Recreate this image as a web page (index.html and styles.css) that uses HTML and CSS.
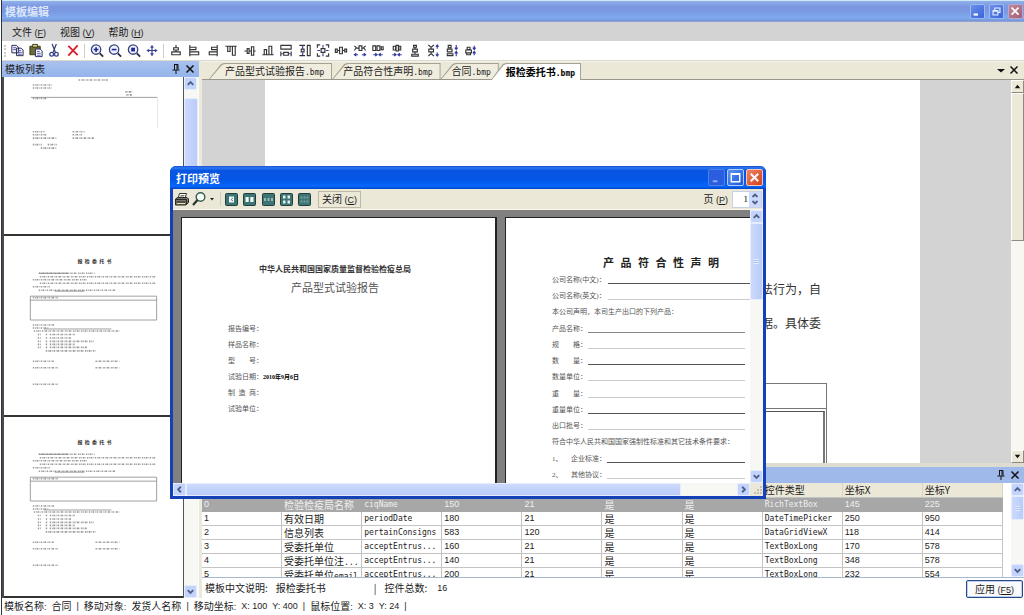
FILE: index.html
```html
<!DOCTYPE html>
<html lang="zh-CN">
<head>
<meta charset="utf-8">
<title>模板编辑</title>
<link rel="stylesheet" href="styles.css">
</head>
<body>
<svg class="defs" aria-hidden="true">
  <symbol id="up" viewBox="0 0 12 12"><path d="M3 7.5 6 4.5l3 3" fill="none" stroke="#4d6185" stroke-width="2"/></symbol>
  <symbol id="down" viewBox="0 0 12 12"><path d="M3 4.5l3 3 3-3" fill="none" stroke="#4d6185" stroke-width="2"/></symbol>
  <symbol id="left" viewBox="0 0 12 12"><path d="M7.5 3l-3 3 3 3" fill="none" stroke="#4d6185" stroke-width="2"/></symbol>
  <symbol id="right" viewBox="0 0 12 12"><path d="M4.500 3l3 3-3 3" fill="none" stroke="#4d6185" stroke-width="2"/></symbol>
  <symbol id="pin" viewBox="0 0 12 12"><path d="M4 1.500h4M4.500 1.500v5M7 1.500v5M8 1.500v5M2.500 7h7M6 7v4" fill="none" stroke="#111"/></symbol>
  <symbol id="cross" viewBox="0 0 12 12"><path d="M2.500 2.500l7 7m0-7l-7 7" fill="none" stroke="#111" stroke-width="1.500"/></symbol>
  <symbol id="form" viewBox="0 0 180 180">
    <text x="91" y="27" class="form-title" text-anchor="middle">报  检  委  托  书</text>
    <g class="micro">
      <path d="M35 37.500H91M36 41H152M29 44H84M36 47.500H152M29 51H46M35 54.500H112M29 62H54M29 89.500H51M29 92.500H45M30 95.500H117"/>
      <path d="M34 99h3M42 99h2M46 99h26M34 102.500h3M42 102.500h2M46 102.500h22M34 106h3M42 106h2M46 106h44M34 109h3M42 109h2M46 109h25M34 112h3M42 112h2M46 112h38M42 115.500h50"/>
      <path d="M29 126H50M92 126h24M29 132.500h25M92 132.500h24M29 149h25"/>
    </g>
    <path class="rule" d="M35 37.500H65M51 55.500H81M40 93.500H108M26.500 60.500h127v24h-127zM26.500 64.500h127"/>
  </symbol>
</svg>

<div class="app">
  <header class="titlebar">
    <h1>模板编辑</h1>
    <div class="win-buttons">
      <button class="win-btn" aria-label="最小化"><svg viewBox="0 0 15 15"><path d="M3 11h5" stroke="#fff" stroke-width="2.500"/></svg></button>
      <button class="win-btn" aria-label="还原"><svg viewBox="0 0 15 15"><path d="M5.500 6V3.500h6v5H9M3.500 6.500h5.500v5H3.500zM3.500 7h5.500" fill="none" stroke="#e6efff" stroke-width="1.300"/></svg></button>
      <button class="win-btn dim-close" aria-label="关闭"><svg viewBox="0 0 15 15"><path d="M3 3l8 8m0-8l-8 8" stroke="#fff" stroke-width="2"/></svg></button>
    </div>
  </header>

  <nav class="menubar">
    <button>文件<span class="lat"> (<u>F</u>)</span></button>
    <button>视图<span class="lat"> (<u>V</u>)</span></button>
    <button>帮助<span class="lat"> (<u>H</u>)</span></button>
  </nav>

  <div class="toolbar">
    <span class="handle"></span>
    <div class="tools tools-edit">
      <button aria-label="复制"><svg viewBox="0 0 16 16"><path d="M2.500 2.500h5l2 2v6h-7zM7.500 5.500h5l2 2v6h-7z" fill="#eef" stroke="#23234d"/><path d="M4 5h3M4 7h3M9 8h3M9 10h4M9 12h4" stroke="#4e54a0"/></svg></button>
      <button aria-label="粘贴"><svg viewBox="0 0 16 16"><path d="M1.500 3.500h11v9h-11z" fill="#6f6c35" stroke="#35330f"/><path d="M4.500 1.500h5v3h-5z" fill="#dcd88c" stroke="#35330f"/><path d="M7.500 6.500h5l2 2v6h-7z" fill="#fff" stroke="#252b70"/><path d="M9 9h3M9 11h4M9 13h4" stroke="#5058a8"/></svg></button>
      <button aria-label="剪切"><svg viewBox="0 0 16 16"><path d="M6 1l3.500 9M10.500 1L7 10" stroke="#333c68" stroke-width="1.300"/><g fill="none" stroke="#35408a" stroke-width="1.400"><circle cx="5.500" cy="12" r="2"/><circle cx="10.500" cy="12" r="2"/></g></svg></button>
      <button aria-label="删除"><svg viewBox="0 0 16 16"><path d="M3 3l10 10M13 2.500L3 13.500" stroke="#d8222a" stroke-width="2"/></svg></button>
    </div>
    <span class="sep"></span>
    <div class="tools tools-zoom">
      <button aria-label="放大"><svg viewBox="0 0 16 16"><circle cx="7" cy="7" r="5" fill="#eef1ff" stroke="#39407e" stroke-width="1.400"/><path d="M4.500 7h5M7 4.500v5" stroke="#20278a" stroke-width="1.700"/><path d="M11 11l3.500 3.500" stroke="#2b2d48" stroke-width="2"/></svg></button>
      <button aria-label="缩小"><svg viewBox="0 0 16 16"><circle cx="7" cy="7" r="5" fill="#eef1ff" stroke="#39407e" stroke-width="1.400"/><path d="M4.500 7h5" stroke="#20278a" stroke-width="1.700"/><path d="M11 11l3.500 3.500" stroke="#2b2d48" stroke-width="2"/></svg></button>
      <button aria-label="适合"><svg viewBox="0 0 16 16"><circle cx="7" cy="7" r="5" fill="#eef1ff" stroke="#39407e" stroke-width="1.400"/><path d="M5 5h4v4H5z" fill="#20278a"/><path d="M11 11l3.500 3.500" stroke="#2b2d48" stroke-width="2"/></svg></button>
      <button aria-label="移动"><svg viewBox="0 0 16 16"><path d="M8 3v10M3 8h10" stroke="#3a4290" stroke-width="1.300"/><path d="M8 2L6 5h4zM8 14l-2-3h4zM2 8l3-2v4zM14 8l-3-2v4z" fill="#3a4290"/></svg></button>
    </div>
    <span class="sep"></span>
    <div class="tools tools-align">
      <button aria-label="居中对齐"><svg viewBox="0 0 16 16"><path d="M8 2v3M8 7.500v2M5.500 5h5v2.500h-5zM3.500 9.500h9v3h-9z"/></svg></button>
      <button aria-label="左对齐"><svg viewBox="0 0 16 16"><path d="M3.500 2v12M4 4.500h6v2.500H4M4 9.500h9v3H4"/></svg></button>
      <button aria-label="右对齐"><svg viewBox="0 0 16 16"><path d="M12.500 2v12M12 4.500H6.500v2.500H12M12 9.500H4v3h8"/></svg></button>
      <button aria-label="顶端对齐"><svg viewBox="0 0 16 16"><path d="M2 3.500h12M4.500 4v5h2.500V4M9.500 4v9h3V4"/></svg></button>
      <button aria-label="中部对齐"><svg viewBox="0 0 16 16"><path d="M2 8.500h3M7 8.500h2.500M12 8.500h2M5 6v5h2V6zM9.500 4v9H12V4z"/></svg></button>
      <button aria-label="底端对齐"><svg viewBox="0 0 16 16"><path d="M2 12.500h12M4 12V7h2.500v5M9 12V3.500h3V12"/></svg></button>
      <button aria-label="相同宽度"><svg viewBox="0 0 16 16"><path d="M2.500 2.500h11v4h-11zM5.500 10h5v3h-5zM2.500 9v5M13.500 9v5"/><path class="blue" d="M3 11.500h2M11 11.500h2"/></svg></button>
      <button aria-label="相同高度"><svg viewBox="0 0 16 16"><path d="M10.500 2.500h3v11h-3zM4 6.500h3v3H4zM2 2.500h6M2 13.500h6"/><path class="blue" d="M5.500 3v3M5.500 10v3"/></svg></button>
      <button aria-label="相同大小"><svg viewBox="0 0 16 16"><path d="M2 5V2h3M11 2h3v3M14 11v3h-3M5 14H2v-3M6 6h4v4H6z"/><path class="blue" d="M8 2v3M8 11v3M2 8h3M11 8h3"/></svg></button>
      <button aria-label="水平间距相等"><svg viewBox="0 0 16 16"><path d="M2 6.500v3.500h2V6.500zM6.500 4.500v7h3v-7zM12 6.500v3h2v-3zM4 8h2M10 8h2"/></svg></button>
      <button aria-label="增大水平间距"><svg viewBox="0 0 16 16"><path d="M2 3l2 2-2 3M7 3v5h3V3zM14 3l-2 2 2 3M4 5.500h3M10 5.500h2"/><path class="blue" d="M2 12.500h4M10 12.500h4M4 11l-2 1.500L4 14M12 11l2 1.500-2 1.500"/></svg></button>
      <button aria-label="减小水平间距"><svg viewBox="0 0 16 16"><path d="M2.500 3v5h3V3zM7 3v5h3V3zM11.500 4v3h2V4z"/><path class="blue" d="M3 12.500h4M9 12.500h4M5 11l2 1.500L5 14M11 11l-2 1.500 2 1.500"/></svg></button>
      <button aria-label="移除水平间距"><svg viewBox="0 0 16 16"><path d="M4 3.500v4h2.500v-4zM7 2.500v6h2.500v-6zM10 3.500v4h2v-4z"/><path class="blue" d="M3 12.500h4M9 12.500h4M5 11l2 1.500L5 14M11 11l-2 1.500 2 1.500"/></svg></button>
      <button aria-label="垂直间距相等"><svg viewBox="0 0 16 16"><path d="M6.500 2.500h3v2h-3zM5.500 6.500h5v3h-5zM4.500 12h7v2h-7zM8 4.500v2M8 10v2"/></svg></button>
      <button aria-label="增大垂直间距"><svg viewBox="0 0 16 16"><path d="M3 2l2 2h2l2-2M3.500 6.500h5v3h-5zM3 14l2-2h2l2 2M6 4v2M6 10v2"/><path class="blue" d="M12.500 2v4M12.500 10v4M11 4l1.500-2L14 4M11 12l1.500 2 1.500-2"/></svg></button>
      <button aria-label="减小垂直间距"><svg viewBox="0 0 16 16"><path d="M4 2.500h3v2.500H4zM3 6.500h5v3H3zM3 11.500h6v2H3z"/><path class="blue" d="M12.500 2v5M12.500 9v5M11 5l1.500 2L14 5M11 11l1.500-2 1.500 2"/></svg></button>
      <button aria-label="移除垂直间距"><svg viewBox="0 0 16 16"><path d="M5 4.500h3V7H5zM3.500 7.500h6v3h-6zM4.500 10.500h4v2h-4z"/><path class="blue" d="M12.500 3v4M12.500 9v4M11 5l1.500 2L14 5M11 11l1.500-2 1.500 2"/></svg></button>
    </div>
  </div>

  <main class="workspace">
    <aside class="side">
      <div class="pane-head">
        <h2>模板列表</h2>
        <button aria-label="固定"><svg><use href="#pin"/></svg></button>
        <button aria-label="关闭"><svg><use href="#cross"/></svg></button>
      </div>
      <div class="side-body">
        <div class="thumbs">
          <svg class="thumb" viewBox="0 0 180 158">
            <path class="micro" d="M75 3h30M29 8h19M29 11h19M122 15h8M123 18h6M29 21.500h14M29 55h12M69 55h12M29 58h14M69 58h10M29 61.500h24M69 61.500h22M29 68h9M44 68h9M37 71.500h16"/>
            <path class="rule" d="M27 20.500H154"/>
            <path class="rule faint" d="M154.500 20V52"/>
          </svg>
          <svg class="thumb" viewBox="0 0 180 180"><use href="#form"/></svg>
          <svg class="thumb" viewBox="0 0 180 180"><use href="#form"/></svg>
        </div>
        <div class="scroll scroll-side">
          <button aria-label="向上"><svg><use href="#up"/></svg></button>
          <span class="thumb-bar"></span>
          <button aria-label="向下"><svg><use href="#down"/></svg></button>
        </div>
      </div>
    </aside>

    <section class="content">
      <div class="tabs">
        <button class="tab">产品型式试验报告<span class="lat">.bmp</span></button>
        <button class="tab">产品符合性声明<span class="lat">.bmp</span></button>
        <button class="tab">合同<span class="lat">.bmp</span></button>
        <button class="tab active">报检委托书<span class="lat">.bmp</span></button>
        <span class="grow"></span>
        <button class="tab-tool" aria-label="标签列表"><svg viewBox="0 0 12 12"><path d="M2 5h8L6 8.500z" fill="#111"/></svg></button>
        <button class="tab-tool" aria-label="关闭"><svg><use href="#cross"/></svg></button>
      </div>

      <div class="canvas">
        <article class="doc">
          <p>法行为，自</p>
          <p>据。具体委</p>
          <div class="doc-grid"><div class="doc-grid-head"></div><div class="doc-grid-body"></div></div>
        </article>
        <div class="classic">
          <button aria-label="向上"><svg viewBox="0 0 12 12"><path d="M6 4L9 8H3z" fill="#111"/></svg></button>
          <span class="classic-thumb"></span>
          <span class="grow"></span>
          <button aria-label="向下"><svg viewBox="0 0 12 12"><path d="M6 8L9 4H3z" fill="#111"/></svg></button>
        </div>
      </div>

      <div class="pane-head grid-head">
        <h2></h2>
        <button aria-label="固定"><svg><use href="#pin"/></svg></button>
        <button aria-label="关闭"><svg><use href="#cross"/></svg></button>
      </div>
      <div class="grid-body">
        <div class="grid-view">
          <table>
            <thead><tr><th></th><th></th><th></th><th></th><th></th><th></th><th></th><th>控件类型</th><th>坐标X</th><th>坐标Y</th></tr></thead>
            <tbody>
              <tr class="selected"><td>0</td><td class="zh">检验检疫局名称</td><td class="code">ciqName</td><td>150</td><td>21</td><td class="zh">是</td><td class="zh">是</td><td class="code">RichTextBox</td><td>145</td><td>225</td></tr>
              <tr><td>1</td><td class="zh">有效日期</td><td class="code">periodDate</td><td>180</td><td>21</td><td class="zh">是</td><td class="zh">是</td><td class="code">DateTimePicker</td><td>250</td><td>950</td></tr>
              <tr><td>2</td><td class="zh">信息列表</td><td class="code">pertainConsigns</td><td>583</td><td>120</td><td class="zh">是</td><td class="zh">是</td><td class="code">DataGridViewX</td><td>118</td><td>414</td></tr>
              <tr><td>3</td><td class="zh">受委托单位</td><td class="code">acceptEntrus...</td><td>160</td><td>21</td><td class="zh">是</td><td class="zh">是</td><td class="code">TextBoxLong</td><td>170</td><td>578</td></tr>
              <tr><td>4</td><td class="zh">受委托单位注<span class="lat">...</span></td><td class="code">acceptEntrus...</td><td>140</td><td>21</td><td class="zh">是</td><td class="zh">是</td><td class="code">TextBoxLong</td><td>348</td><td>578</td></tr>
              <tr><td>5</td><td class="zh">受委托单位<span class="lat">email</span></td><td class="code">acceptEntrus...</td><td>200</td><td>21</td><td class="zh">是</td><td class="zh">是</td><td class="code">TextBoxLong</td><td>232</td><td>554</td></tr>
            </tbody>
          </table>
        </div>
        <div class="scroll scroll-grid">
          <button aria-label="向上"><svg><use href="#up"/></svg></button>
          <span class="thumb-bar grip-v"></span>
          <span class="grow"></span>
          <button aria-label="向下"><svg><use href="#down"/></svg></button>
        </div>
      </div>
      <div class="grid-foot">
        <span>模板中文说明:</span><span class="desc">报检委托书</span><span class="bar">|</span><span class="count">控件总数:</span><span class="num-text">16</span>
        <span class="grow"></span>
        <button class="apply">应用<span class="lat"> (<u>F5</u>)</span></button>
      </div>
    </section>
  </main>

  <footer class="status">
    <span>模板名称<b>:</b></span><span>合同</span><b>|</b>
    <span>移动对象<b>:</b></span><span>发货人名称</span><b>|</b>
    <span>移动坐标<b>:</b></span><b>X: 100</b><b>Y: 400</b><b>|</b>
    <span>鼠标位置<b>:</b></span><b>X: 3</b><b>Y: 24</b><b>|</b>
  </footer>

  <section class="dialog" role="dialog" aria-label="打印预览">
    <div class="dialog-title">
      <h2>打印预览</h2>
      <div class="win-buttons dialog-buttons">
        <button class="win-btn" aria-label="最小化"><svg viewBox="0 0 16 16"><path d="M4 12h5" stroke="#8fb2f2" stroke-width="2"/></svg></button>
        <button class="win-btn bright" aria-label="最大化"><svg viewBox="0 0 16 16"><path d="M3.500 4h9v8.500h-9zM3 4.500h10" fill="none" stroke="#fff" stroke-width="1.500"/></svg></button>
        <button class="win-btn close" aria-label="关闭"><svg viewBox="0 0 16 16"><path d="M4 4l8 8m0-8l-8 8" stroke="#fff" stroke-width="2"/></svg></button>
      </div>
    </div>
    <div class="dialog-tools">
      <button class="icon" aria-label="打印"><svg viewBox="0 0 16 16"><path d="M5.500 2.500h7l-1.500 5H4z" fill="#fff" stroke="#333"/><path d="M6.500 4.500h4M6 6h4" stroke="#777"/><path d="M1.500 8l2-1.500h9.500L14.500 8v3.500l-2.500 2.500H1.500z" fill="#77776d" stroke="#292925"/><path d="M2 8.500h10.500v5M2.500 11h9" fill="none" stroke="#292925"/><path d="M3 12.500h8" stroke="#e9e4a6"/></svg></button>
      <button class="icon" aria-label="缩放"><svg viewBox="0 0 16 16"><circle cx="9.500" cy="6" r="4.300" fill="#f5fff8" stroke="#3c5b50" stroke-width="1.400"/><path d="M6.500 9L2 14" stroke="#25352e" stroke-width="2.200"/></svg></button>
      <button class="caret" aria-label="缩放选项"><svg viewBox="0 0 8 8"><path d="M2 3h4L4 5.500z" fill="#222"/></svg></button>
      <span class="sep"></span>
      <div class="page-modes">
        <button aria-label="一页"><svg viewBox="0 0 13 13"><rect x="0.500" y="0.500" width="12" height="12" rx="1" fill="#3e7474" stroke="#203f3f"/><path d="M4 3.500h5v6H4z" fill="#eef7f4"/><path d="M8 5L6 6.500 8 8" fill="none" stroke="#5c8583"/></svg></button>
        <button aria-label="两页"><svg viewBox="0 0 13 13"><rect x="0.500" y="0.500" width="12" height="12" rx="1" fill="#3e7474" stroke="#203f3f"/><path d="M2.500 4h3.200v5H2.500zM7.300 4h3.200v5H7.300z" fill="#eef7f4"/></svg></button>
        <button aria-label="三页"><svg viewBox="0 0 13 13"><rect x="0.500" y="0.500" width="12" height="12" rx="1" fill="#3e7474" stroke="#203f3f"/><path d="M2 5h2v3H2zM5.500 5h2v3h-2zM9 5h2v3H9z" fill="#8fb8b3"/></svg></button>
        <button aria-label="四页"><svg viewBox="0 0 13 13"><rect x="0.500" y="0.500" width="12" height="12" rx="1" fill="#3e7474" stroke="#203f3f"/><path d="M3 2.500h2.500v3H3zM7.500 2.500H10v3H7.500zM3 7.500h2.500v3H3zM7.500 7.500H10v3H7.500z" fill="#e0f0ec"/></svg></button>
        <button aria-label="六页"><svg viewBox="0 0 13 13"><rect x="0.500" y="0.500" width="12" height="12" rx="1" fill="#3e7474" stroke="#203f3f"/><path d="M2.500 3.500h2v2h-2zM5.500 3.500h2v2h-2zM8.500 3.500h2v2h-2zM2.500 7.500h2v2h-2zM5.500 7.500h2v2h-2zM8.500 7.500h2v2h-2z" fill="#6f9d99"/></svg></button>
      </div>
      <button class="close-preview">关闭<span class="lat"> (<u>C</u>)</span></button>
      <span class="grow"></span>
      <label for="page-no">页<span class="lat"> (<u>P</u>)</span></label>
      <div class="spinner">
        <input id="page-no" type="text" value="1">
        <div class="spin-buttons">
          <button aria-label="下一页"><svg viewBox="0 0 10 7"><path d="M2.500 5L5 2.500 7.500 5" fill="none" stroke="#4d6185" stroke-width="1.800"/></svg></button>
          <button aria-label="上一页"><svg viewBox="0 0 10 7"><path d="M2.500 2L5 4.500 7.500 2" fill="none" stroke="#4d6185" stroke-width="1.800"/></svg></button>
        </div>
      </div>
    </div>
    <div class="preview">
      <div class="pages">
        <article class="page report">
          <h3>中华人民共和国国家质量监督检验检疫总局</h3>
          <h4>产品型式试验报告</h4>
          <ul>
            <li>报告编号：</li>
            <li>样品名称：</li>
            <li><span class="spread"><i>型</i><i>号</i></span>：</li>
            <li>试验日期：<b>2010年9月6日</b></li>
            <li><span class="spread"><i>制</i><i>造</i><i>商</i></span>：</li>
            <li>试验单位：</li>
          </ul>
        </article>
        <article class="page statement">
          <h3><i>产</i><i>品</i><i>符</i><i>合</i><i>性</i><i>声</i><i>明</i></h3>
          <div class="fields">
            <div class="wide"><span class="name">公司名称(中文)：</span><span class="line dark"></span></div>
            <div class="wide"><span class="name">公司名称(英文)：</span><span class="line"></span></div>
            <div><span>本公司声明，本司生产出口的下列产品：</span></div>
            <div><span class="name">产品名称：</span><span class="line mid"></span></div>
            <div><span class="name"><span class="spread"><i>规</i><i>格</i></span>：</span><span class="line"></span></div>
            <div><span class="name"><span class="spread"><i>数</i><i>量</i></span>：</span><span class="line dark"></span></div>
            <div><span class="name">数量单位：</span><span class="line"></span></div>
            <div><span class="name"><span class="spread"><i>重</i><i>量</i></span>：</span><span class="line"></span></div>
            <div><span class="name">重量单位：</span><span class="line dark"></span></div>
            <div><span class="name">出口批号：</span><span class="line"></span></div>
            <div><span>符合中华人民共和国国家强制性标准和其它技术条件要求：</span></div>
            <div class="item"><span class="num">1、</span><span class="name">企业标准：</span><span class="line dark"></span></div>
            <div class="item"><span class="num">2、</span><span class="name">其他协议：</span><span class="line"></span></div>
          </div>
        </article>
      </div>
      <div class="scroll scroll-preview">
        <button aria-label="向上"><svg><use href="#up"/></svg></button>
        <span class="thumb-bar grip-v"></span>
        <span class="grow"></span>
        <button aria-label="向下"><svg><use href="#down"/></svg></button>
      </div>
    </div>
    <div class="h-row">
      <div class="scroll-h">
        <button aria-label="向左"><svg><use href="#left"/></svg></button>
        <span class="thumb-bar"></span>
        <button aria-label="向右"><svg><use href="#right"/></svg></button>
      </div>
      <svg class="size-grip" viewBox="0 0 13 13"><path d="M10 4h2M10 7h2M7 7h2M10 10h2M7 10h2M4 10h2" stroke="#b8b4a2" stroke-width="1.500"/></svg>
    </div>
  </section>
</div>
</body>
</html>
```

FILE: styles.css
```css
* { box-sizing: border-box; }

body {
  margin: 0;
  font: 10px/14px "Noto Sans CJK SC", sans-serif;
  color: #1c1c1c;
  background: #fff;
}

button {
  margin: 0;
  padding: 0;
  border: 0;
  background: none;
  font: inherit;
  color: inherit;
}

svg { display: block; }
h1, h2, h3, h4, p, ul { margin: 0; padding: 0; font-weight: normal; }
ul { list-style: none; }
i { font-style: normal; }
.defs { position: absolute; width: 0; height: 0; }
.grow { flex: 1; }
.lat { font: 9px/12px "Liberation Sans", sans-serif; white-space: pre; }

.app {
  position: relative;
  display: flex;
  flex-direction: column;
  height: 100vh;
  margin-left: 1px;
  border-left: 1px solid #2c3444;
  overflow: hidden;
}

/* Main window chrome */
.titlebar {
  display: flex;
  align-items: center;
  justify-content: space-between;
  height: 22px;
  padding: 0 1px 0 3px;
  border-top: 1px solid #cfe6f6;
  border-bottom: 1px solid #8ea0d4;
  background: linear-gradient(#8fb0ea 0, #7b96e0 30%, #7b9ae2 55%, #7fabee 85%, #7694d6 100%);
}
.titlebar h1 { font-size: 11px; font-weight: bold; color: #dce6fa; }
.win-buttons { display: flex; gap: 4px; }
.win-btn {
  width: 15px;
  height: 15px;
  border: 1px solid #9db9f3;
  border-radius: 2px;
  background: linear-gradient(135deg, #6c90ea, #3b63d8);
}
.win-btn svg { width: 100%; height: 100%; }
.dim-close { background: linear-gradient(135deg, #c08a9c, #a35c74); border-color: #b8a8d0; }

.menubar {
  display: flex;
  gap: 14px;
  height: 19px;
  padding-left: 10px;
  background: #d3d3d3;
}

.toolbar {
  display: flex;
  align-items: center;
  height: 19px;
  padding-left: 2px;
  background: #fff;
}
.handle { width: 2px; height: 12px; margin-right: 3px; border-left: 2px dotted #ccc; }
.tools { display: flex; justify-content: space-between; }
.tools svg { width: 16px; height: 15px; }
.tools-edit { width: 72px; }
.tools-zoom { width: 71px; }
.tools-align { width: 310px; }
.tools-align path { fill: none; stroke: #333; stroke-width: 1.2; }
.tools-align .blue { stroke: #3038a0; }
.sep { width: 1px; height: 14px; margin: 0 4px 0 3px; background: #ccc; }

.workspace {
  display: flex;
  flex: 1;
  min-height: 0;
  gap: 3px;
  border-top: 1px solid #dcd9cc;
  background: #ebe8dc;
}

/* Panes */
.pane-head {
  display: flex;
  align-items: center;
  gap: 2px;
  height: 16px;
  padding: 0 3px 0 3px;
  background: #9fb9ea;
}
.pane-head h2 { flex: 1; font-size: 10px; }
.pane-head svg { width: 12px; height: 12px; }
.side { display: flex; flex-direction: column; width: 197px; }
.side .pane-head { background: linear-gradient(#a9c1ee, #94b4ea); }
.side-body { display: flex; flex: 1; min-height: 0; background: #fbfbf8; }
.thumbs {
  flex: 1;
  overflow: hidden;
  border-left: 2px solid #4b4b4b;
  border-right: 1px solid #555;
  background: #fff;
}
.thumb { width: 100%; height: auto; border-bottom: 2px solid #333; }
.micro { fill: none; stroke: #999; stroke-width: 1.6; stroke-dasharray: 1.4 .8 .7 .7 2 .8 .5 1; }
.rule { fill: none; stroke: #888; stroke-width: .8; }
.faint { stroke: #e2e2e2; }
.form-title { font: bold 5px "Noto Sans CJK SC", sans-serif; white-space: pre; fill: #333; }

/* Rounded blue scroll bars */
.scroll { display: flex; flex-direction: column; width: 13px; background: #f7f7f3; }
.scroll button, .scroll-h button {
  flex: none;
  width: 13px;
  height: 13px;
  border: 1px solid #e4ecfd;
  border-radius: 2px;
  background: #c3d3fc;
}
.scroll svg, .scroll-h svg { width: 100%; height: 100%; }
.thumb-bar { border: 1px solid #e4ecfd; border-radius: 2px; background: linear-gradient(90deg, #cddafd, #b9cbf8); }
.grip-v { display: grid; place-items: center; }
.grip-v::before { content: ""; width: 5px; height: 5px; background: repeating-linear-gradient(#e4ecfd 0 1px, #b0c4f2 1px 2px); }
.scroll-side { width: 14px; margin-right: 1px; }
.scroll-side .thumb-bar { height: 240px; margin: 8px 0 auto; }

/* Document area */
.content { display: flex; flex: 1; flex-direction: column; min-width: 0; background: #fff; }
.tabs {
  display: flex;
  align-items: flex-end;
  height: 19px;
  padding: 0 4px 0 7px;
  border-top: 1px solid #f5f3ea;
  border-bottom: 1px solid #98978d;
  background: #ebe8d7;
}
.tab {
  position: relative;
  z-index: 0;
  height: 16px;
  padding: 0 8px 0 11px;
  line-height: 15px;
  white-space: nowrap;
}
.tab:first-child { padding-left: 16px; }
.tab::before, .tab::after {
  content: "";
  position: absolute;
  z-index: -1;
  inset: 0;
  background: #a5a395;
  clip-path: polygon(0 100%, 12px 1px, 15px 0, 100% 0, 100% 100%);
}
.tab::after { inset: 1px 1px 0 1px; background: #f0eddf; }
.tab.active { z-index: 1; margin: 0 0 -1px -8px; padding: 0 6px 0 15px; height: 17px; font-weight: bold; color: #000; }
.tab.active::after { background: #fff; }
.tab .lat { font: 8px/12px "DejaVu Sans Mono", monospace; }
.tab.active .lat { font-weight: bold; }
.tab-tool svg { width: 12px; height: 12px; }
.tab-tool { margin: 0 0 3px 1px; }

.canvas { display: flex; flex: 1; min-height: 0; background: #d3d3d3; }
.doc {
  flex: 1;
  min-height: 0;
  margin: 0 91px 0 63px;
  padding: 192px 93px 0 60px;
  overflow: hidden;
  background: #fff;
}
.doc p { padding-right: 6px; font-size: 12px; line-height: 34px; text-align: right; color: #333; }
.doc-grid { margin-top: 43px; border: 1px solid #777; border-bottom: 0; }
.doc-grid-head { height: 25px; border-bottom: 1px solid #777; }
.doc-grid-body { height: 80px; margin: 2px 1px 0 1px; border: 1px solid #555; border-right: 2px solid #777; }

.classic { display: flex; flex-direction: column; width: 13px; background: #f8f7f1; }
.classic button, .classic-thumb {
  border: 1px solid;
  border-color: #fff #8d8b80 #8d8b80 #fff;
  background: #ece9d8;
}
.classic button { width: 13px; height: 13px; }
.classic button svg { width: 100%; height: 100%; }
.classic-thumb { height: 148px; }

/* Property grid */
.grid-head { height: 20px; border-top: 4px solid #dedcd2; }
.grid-body { display: flex; height: 95px; border-bottom: 1px solid #a8b8cc; background: #fff; }
.grid-view { flex: 1; min-width: 0; margin-right: 8px; overflow: hidden; }
table { width: 100%; border-collapse: separate; border-spacing: 0; table-layout: fixed; }
th, td {
  height: 14px;
  padding: 0 2px;
  overflow: hidden;
  border-right: 1px solid #c4c4c4;
  border-bottom: 1px solid #c4c4c4;
  font: 9px/13px "Liberation Sans", sans-serif;
  text-align: left;
  white-space: nowrap;
}
th { height: 15px; border-right-color: #d8d4c2; background: #ebe8d8; font: 10px/14px "Noto Sans CJK SC", sans-serif; }
td.zh { font: 10px/13px "Noto Sans CJK SC", sans-serif; }
td.zh .lat { font: 8px/8px "DejaVu Sans Mono", monospace; }
td.code { padding-right: 0; font: 8px/13px "DejaVu Sans Mono", monospace; }
.selected td { border-color: #a7a7a7; background: #a7a7a7; color: #f0f0f0; }
.scroll-grid .thumb-bar { height: 24px; }

.grid-foot { display: flex; align-items: center; height: 20px; padding: 0 1px 0 3px; }
.desc { margin-left: 8px; }
.bar { margin: 0 8px 0 48px; }
.count { margin-right: 10px; }
.num-text, .status b { font: 9px/14px "Liberation Sans", sans-serif; }
.apply {
  align-self: flex-end;
  height: 18px;
  padding: 0 8px;
  border: 1px solid #2a4a86;
  border-radius: 2px;
  background: #fafafa;
  box-shadow: inset 0 0 0 1px #bcd0f4;
}
.status { display: flex; gap: 5px; height: 17px; padding: 1px 0 0 2px; background: #fff; }

/* Print preview window, floating over the editor */
.dialog {
  position: absolute;
  top: 166px;
  left: 168px;
  display: flex;
  flex-direction: column;
  width: 596px;
  height: 333px;
  padding: 0 3px 3px;
  border-radius: 6px 6px 0 0;
  background: #1440b8;
}
.dialog-title {
  display: flex;
  align-items: center;
  justify-content: space-between;
  height: 23px;
  margin: 0 -3px;
  padding: 0 3px 0 6px;
  border-radius: 6px 6px 0 0;
  background: linear-gradient(#1c50c8 0, #2b78f5 8%, #0a55e0 20%, #0356e6 60%, #0668fb 88%, #0344c4 100%);
}
.dialog-title h2 { font-size: 11px; font-weight: bold; color: #fff; }
.dialog-buttons { gap: 2px; }
.dialog .win-btn { width: 17px; height: 17px; border-color: #4d80ea; background: #2a5ddf; }
.dialog .bright { border-color: #b5cdf8; background: linear-gradient(135deg, #5c95f5, #1c56dd); }
.dialog .close { border-color: #f4c5b8; background: linear-gradient(135deg, #ee8464, #d2401c); }

.dialog-tools {
  display: flex;
  align-items: center;
  height: 21px;
  padding: 0 1px;
  border-bottom: 1px solid #f7f5ec;
  background: #ebe8d8;
}
.icon svg { width: 16px; height: 16px; }
.icon + .icon { margin-left: 1px; }
.caret svg { width: 10px; height: 8px; }
.page-modes { display: flex; justify-content: space-between; width: 86px; margin-right: 7px; }
.page-modes svg { width: 13px; height: 13px; }
.close-preview { height: 17px; padding: 0 3px; border: 1px solid #bdb9a6; }
.dialog-tools label { margin-right: 4px; }
.spinner { display: flex; width: 30px; height: 17px; border: 1px solid #c8d2e4; background: #fff; }
.spinner input {
  flex: 1;
  min-width: 0;
  padding: 0 1px;
  border: 0;
  background: transparent;
  font: 9px "Liberation Serif", serif;
  text-align: right;
}
.spin-buttons { display: flex; flex-direction: column; width: 12px; }
.spin-buttons button { flex: 1; background: #cddafd; }
.spin-buttons svg { width: 12px; height: 7px; }

.preview { display: flex; flex: 1; min-height: 0; background: #808080; }
.pages { display: flex; flex: 1; gap: 8px; min-width: 0; padding: 7px 0 0 8px; overflow: hidden; }
.page {
  border: 1px solid #222;
  border-bottom: 0;
  background: #fff;
  font-family: "Liberation Serif", "Noto Sans CJK SC", serif;
  color: #555;
}
.report { flex: none; width: 316px; padding: 44px 0 0 46px; border-right-width: 2px; }
.report h3 { margin-left: 31px; font-size: 8px; font-weight: bold; line-height: 16px; color: #333; }
.report h4 { margin-left: 63px; font-size: 11px; line-height: 20px; }
.report ul { margin-top: 23px; font-size: 7px; line-height: 16px; }
.report b { font-size: 6px; color: #000; }
.spread { display: inline-flex; justify-content: space-between; width: 28px; }

.statement { flex: 1; min-width: 0; padding: 36px 0 0 46px; border-right: 0; }
.statement h3 {
  display: flex;
  justify-content: space-between;
  width: 116px;
  margin-left: 51px;
  font-size: 11px;
  font-weight: bold;
  line-height: 18px;
  color: #222;
}
.fields { display: grid; grid-auto-rows: 1fr; height: 211px; font-size: 7px; line-height: 16px; }
.fields > div { display: flex; padding-right: 5px; white-space: nowrap; }
.fields > .wide { padding-right: 0; }
.name { width: 36px; }
.wide .name { width: 56px; }
.item .num { width: 19px; }
.item .name { width: 36px; }
.line { flex: 1; height: 12px; border-bottom: 1px solid #ccc; }
.line.mid { border-color: #888; }
.line.dark { border-color: #555; }
.scroll-preview .thumb-bar { height: 77px; }

.h-row { display: flex; height: 13px; background: #ebe8d8; }
.scroll-h { display: flex; flex: 1; background: #f7f7f3; }
.scroll-h .thumb-bar { flex: 1; margin-right: 56px; background: linear-gradient(#cddafd, #b9cbf8); }
.size-grip { width: 13px; height: 13px; }
```
